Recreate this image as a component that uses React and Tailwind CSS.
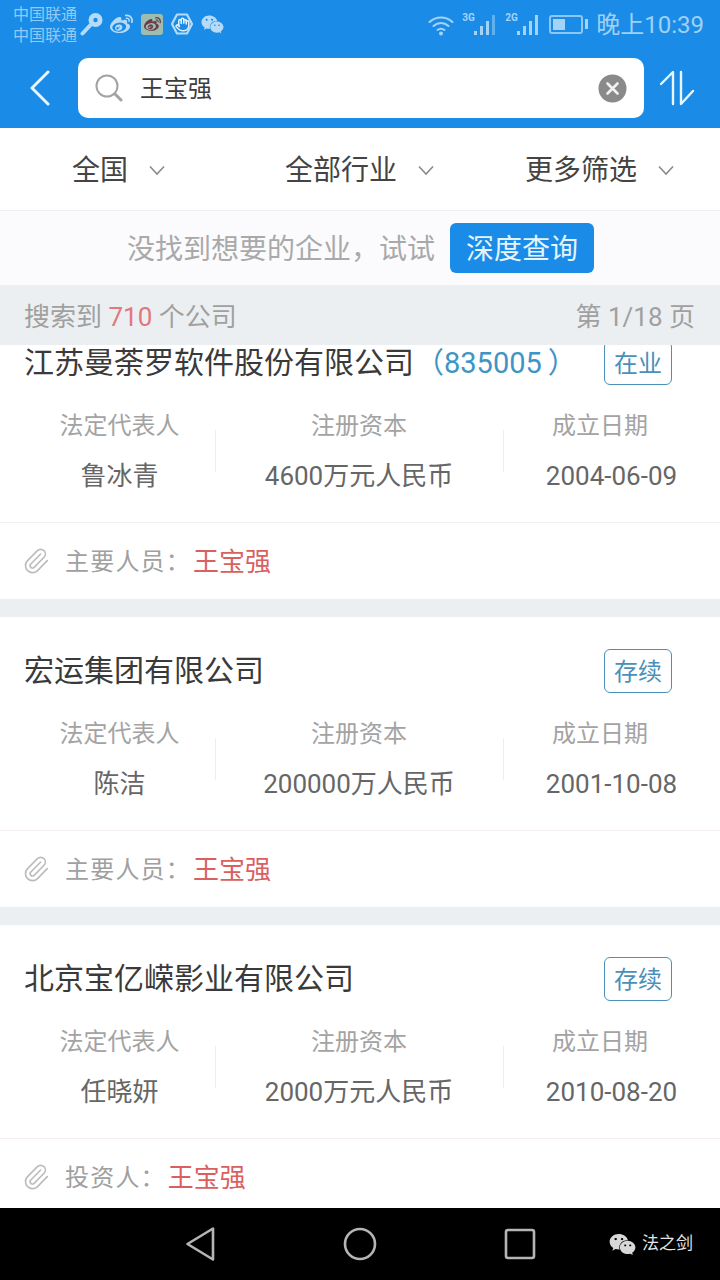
import React from "react";
import { FaWeibo, FaWeixin } from "react-icons/fa";
import { Hand, Paperclip } from "lucide-react";

const font = { fontFamily: '"Roboto","Noto Sans CJK SC",sans-serif' };

function Signal({ label, dim }) {
  return (
    <div className="relative w-[35px] h-[24px]">
      <span className="absolute left-0 top-[-1px] text-[10px] font-bold leading-[14px] text-[#a5d3f6]">{label}</span>
      <svg width="35" height="24" viewBox="0 0 35 24" className="absolute left-0 top-[1px]">
        <rect x="12" y="18" width="3" height="4" fill="#a5d3f6" />
        <rect x="18" y="13" width="3" height="9" fill="#a5d3f6" />
        <rect x="24" y="8" width="3" height="14" fill="#a5d3f6" />
        <rect x="30" y="2" width="3" height="20" fill={dim ? "#5fb0ee" : "#a5d3f6"} />
      </svg>
    </div>
  );
}

function StatusBar() {
  return (
    <div className="h-[48px] mb-[10px] pl-[13px] pr-[16px] flex items-center text-[#93c9f5]">
      <div className="w-[67px] text-[16px] leading-[21px] pt-[2px]">
        <div>中国联通</div>
        <div>中国联通</div>
      </div>
      <svg width="24" height="24" viewBox="0 0 24 24">
        <circle cx="15.5" cy="8" r="7" fill="#b5dbf8" />
        <circle cx="15.5" cy="8" r="2.2" fill="#1a8ce8" />
        <path d="M10 13.5 2.5 21.5" stroke="#b5dbf8" strokeWidth="4" strokeLinecap="round" />
      </svg>
      <FaWeibo size={23} className="ml-[6px] text-[#b5dbf8]" />
      <div className="ml-[8px] w-[22px] h-[21px] rounded-[3px] bg-[#9dbdb0] flex items-center justify-center">
        <FaWeibo size={17} className="text-[#6d3b4b]" />
      </div>
      <div className="ml-[8px] w-[22px] h-[22px] relative flex items-center justify-center">
        <svg width="22" height="22" viewBox="0 0 22 22" className="absolute inset-0">
          <polygon points="6,1.5 16,1.5 21,11 16,20.5 6,20.5 1,11" fill="none" stroke="#b5dbf8" strokeWidth="2.2" strokeLinejoin="round" />
        </svg>
        <Hand size={15} className="text-[#e2f1fc]" strokeWidth={2.4} />
      </div>
      <FaWeixin size={23} className="ml-[8px] text-[#b5dbf8]" />
      <div className="flex-1" />
      <svg width="26" height="22" viewBox="0 0 26 22" className="text-[#a5d3f6] mt-[1px]">
        <path d="M1.5 8C8 2 18 2 24.5 8M5.5 12C10 8 16 8 20.5 12M9.5 16C11.5 14.5 14.5 14.5 16.5 16" fill="none" stroke="currentColor" strokeWidth="2" strokeLinecap="round" />
        <circle cx="13" cy="19.5" r="2" fill="currentColor" />
      </svg>
      <div className="ml-[8px]"><Signal label="3G" dim /></div>
      <div className="ml-[8px]"><Signal label="2G" /></div>
      <div className="ml-[9px] flex items-center">
        <div className="w-[34px] h-[19px] rounded-[3px] border-2 border-[#8cc6f3] p-[2px]">
          <div className="w-[12px] h-full bg-[#a5d3f6]" />
        </div>
        <div className="ml-[2px] w-[3px] h-[10px] bg-[#a5d3f6]" />
      </div>
      <div className="ml-[8px] pt-[2px] text-[24px] leading-[30px] text-[#a0d0f5]">晚上10:39</div>
    </div>
  );
}

function SearchRow() {
  return (
    <div className="h-[60px] mb-[10px] flex items-center">
      <div className="w-[78px] flex pl-[29px]">
        <svg width="22" height="36" viewBox="0 0 22 36" fill="none">
          <path d="M19 2 3 18l16 16" stroke="#e8f5fe" strokeWidth="3" strokeLinecap="round" strokeLinejoin="round" />
        </svg>
      </div>
      <div className="w-[566px] h-[60px] rounded-[10px] bg-white flex items-center pl-[17px] pr-[16px]">
        <svg width="28" height="28" viewBox="0 0 28 28" fill="none">
          <circle cx="12" cy="12" r="10.5" stroke="#a3a3a3" strokeWidth="2" />
          <path d="m20 20 6 6" stroke="#a3a3a3" strokeWidth="3" strokeLinecap="round" />
        </svg>
        <span className="ml-[17px] pt-[2px] text-[24px] text-[#3d3d3d]">王宝强</span>
        <div className="flex-1" />
        <svg width="29" height="29" viewBox="0 0 29 29" fill="none" className="ml-[-1px] mr-[1px]">
          <circle cx="14.5" cy="14.5" r="14" fill="#8a8a8a" />
          <path d="m9.5 9.5 10 10m0-10-10 10" stroke="#f2f2f2" strokeWidth="2.6" strokeLinecap="round" />
        </svg>
      </div>
      <div className="ml-[15px]">
        <svg width="36" height="36" viewBox="0 0 36 36" fill="none">
          <path d="M2 14 14 2v32M22 2v32l12-13" stroke="#e8f5fe" strokeWidth="2.4" strokeLinecap="round" strokeLinejoin="round" />
        </svg>
      </div>
    </div>
  );
}

function Chevron() {
  return (
    <svg width="18" height="11" viewBox="0 0 18 11" fill="none" className="mb-[2px]">
      <path d="m2 1.5 7 7.5 7-7.5" stroke="#8a8a8a" strokeWidth="1.6" />
    </svg>
  );
}

function Filters() {
  return (
    <div className="h-[83px] bg-white border-b border-[#efefef] text-[28px] text-[#444]">
      <div className="h-full flex items-center pt-[4px]">
        <div className="w-[285px] pl-[72px] flex items-center gap-[20px]"><span>全国</span><Chevron /></div>
        <div className="w-[240px] flex items-center gap-[20px]"><span>全部行业</span><Chevron /></div>
        <div className="flex items-center gap-[20px]"><span>更多筛选</span><Chevron /></div>
      </div>
    </div>
  );
}

function Banner() {
  return (
    <div className="h-[74px] bg-[#fbfbfd] flex items-center pl-[127px]">
      <span className="pt-[3px] text-[28px] text-[#a9a9a9] w-[323px] whitespace-nowrap">没找到想要的企业，试试</span>
      <div className="w-[144px] h-[50px] pt-[3px] rounded-[6px] bg-[#1a8ce8] text-[#e6f4fe] text-[28px] flex items-center justify-center">深度查询</div>
    </div>
  );
}

function CountBar() {
  return (
    <div className="relative z-10 h-[60px] pt-[4px] bg-[#eceff1] pl-[24px] pr-[25px] flex items-center justify-between text-[26px] text-[#a0a0a0]">
      <div>搜索到 <span className="text-[#e0787c]">710</span> 个公司</div>
      <div>第 1/18 页</div>
    </div>
  );
}

function Card({ title, code, badge, rep, capital, date, role }) {
  return (
    <div className="h-[290px] mb-[18px] bg-white">
      <div className="pt-[32px] pl-[24px] pr-[48px] h-[76px] flex items-center">
        <div className="text-[30px] leading-[44px] text-[#3a3a3a] whitespace-nowrap">{title}</div>
        {code && (
          <div className="ml-[1px] text-[29px] leading-[44px] text-[#3f94c5] whitespace-nowrap">
            （835005<span className="ml-[6px]">）</span>
          </div>
        )}
        <div className="flex-1" />
        <div className="w-[68px] h-[44px] pt-[2px] rounded-[6px] border border-[#4a90b8] text-[24px] text-[#4a90b8] flex items-center justify-center">{badge}</div>
      </div>
      <div className="mt-[16px] pt-[1px] h-[121px] grid grid-cols-[215px_288px_217px]">
        <div className="pl-[24px] text-center">
          <div className="h-[48px] leading-[48px] text-[24px] text-[#a3a3a3]">法定代表人</div>
          <div className="h-[52px] leading-[52px] text-[26px] text-[#666]">{rep}</div>
        </div>
        <div className="relative text-center">
          <div className="absolute left-0 top-[28px] h-[42px] w-px bg-[#eeeeee]" />
          <div className="h-[48px] leading-[48px] text-[24px] text-[#a3a3a3]">注册资本</div>
          <div className="h-[52px] leading-[52px] text-[26px] text-[#666] whitespace-nowrap">{capital}</div>
        </div>
        <div className="relative text-center">
          <div className="absolute left-0 top-[28px] h-[42px] w-px bg-[#eeeeee]" />
          <div className="h-[48px] leading-[48px] text-[24px] text-[#a3a3a3] pr-[23px]">成立日期</div>
          <div className="h-[52px] leading-[52px] text-[26px] text-[#666]">{date}</div>
        </div>
      </div>
      <div className="h-[77px] border-t border-[#f5eef2] pl-[22px] pt-[2px] flex items-center text-[24px] text-[#a0a0a0]">
        <Paperclip size={28} className="text-[#bcbcbc] mb-[2px]" strokeWidth={1.4} />
        <span className="ml-[15px] tracking-[1.2px]">{role}：</span>
        <span className="ml-[2px] text-[26px] text-[#d9605f]">王宝强</span>
      </div>
    </div>
  );
}

function NavBar() {
  return (
    <div className="h-[72px] bg-black flex items-center text-[#b5b5b5]">
      <div className="w-[185px]" />
      <svg width="30" height="36" viewBox="0 0 30 36" fill="none">
        <path d="M28 2.5v31L2.5 18z" stroke="currentColor" strokeWidth="2.6" strokeLinejoin="round" />
      </svg>
      <svg width="34" height="34" viewBox="0 0 34 34" fill="none" className="ml-[128px]">
        <circle cx="17" cy="17" r="15" stroke="currentColor" strokeWidth="2.6" />
      </svg>
      <svg width="32" height="32" viewBox="0 0 32 32" fill="none" className="ml-[127px]">
        <rect x="2" y="2" width="28" height="28" rx="2" stroke="currentColor" strokeWidth="2.6" />
      </svg>
      <FaWeixin size={27} className="ml-[73px] text-[#d8d8d8]" />
      <span className="ml-[6px] text-[17px] text-[#e6e6e6] whitespace-nowrap">法之剑</span>
    </div>
  );
}

export default function App() {
  return (
    <div className="w-[720px] h-[1280px] flex flex-col overflow-hidden bg-[#eceff1]" style={font}>
      <div className="h-[128px] bg-[#1a8ce8]">
        <StatusBar />
        <SearchRow />
      </div>
      <Filters />
      <Banner />
      <CountBar />
      <div className="flex-1 overflow-hidden">
        <div className="mt-[-36px]">
          <Card title="江苏曼荼罗软件股份有限公司" code badge="在业" rep="鲁冰青" capital="4600万元人民币" date="2004-06-09" role="主要人员" />
          <Card title="宏运集团有限公司" badge="存续" rep="陈洁" capital="200000万人民币" date="2001-10-08" role="主要人员" />
          <Card title="北京宝亿嵘影业有限公司" badge="存续" rep="任晓妍" capital="2000万元人民币" date="2010-08-20" role="投资人" />
        </div>
      </div>
      <NavBar />
    </div>
  );
}
